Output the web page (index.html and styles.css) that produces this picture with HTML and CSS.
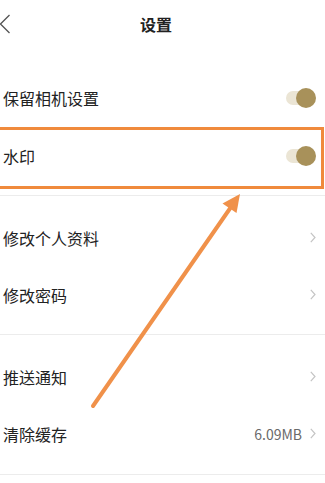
FILE: index.html
```html
<!DOCTYPE html>
<html lang="zh">
<head>
<meta charset="utf-8">
<title>设置</title>
<link rel="stylesheet" href="styles.css">
</head>
<body>
<div class="page">
  <header class="header">
    <svg class="back" width="12" height="20" viewBox="0 0 12 20"><polyline points="10.5,1 1.5,10 10.5,19" fill="none" stroke="#555" stroke-width="1.3"/></svg>
    <h1 class="title">设置</h1>
  </header>

  <section class="group group-first">
    <div class="row">
      <span class="label">保留相机设置</span>
      <span class="toggle"><span class="track"></span><span class="knob"></span></span>
    </div>
    <div class="row row-marked">
      <span class="label">水印</span>
      <span class="toggle"><span class="track"></span><span class="knob"></span></span>
      <span class="mark"></span>
    </div>
  </section>

  <section class="group">
    <div class="row row-s">
      <span class="label">修改个人资料</span>
      <svg class="chev" width="6" height="11" viewBox="0 0 6 11"><polyline points="0.8,0.8 5,5.5 0.8,10.2" fill="none" stroke="#c4c4c4" stroke-width="1.2"/></svg>
    </div>
    <div class="row row-s">
      <span class="label">修改密码</span>
      <svg class="chev" width="6" height="11" viewBox="0 0 6 11"><polyline points="0.8,0.8 5,5.5 0.8,10.2" fill="none" stroke="#c4c4c4" stroke-width="1.2"/></svg>
    </div>
  </section>

  <section class="group">
    <div class="row row-s">
      <span class="label">推送通知</span>
      <svg class="chev" width="6" height="11" viewBox="0 0 6 11"><polyline points="0.8,0.8 5,5.5 0.8,10.2" fill="none" stroke="#c4c4c4" stroke-width="1.2"/></svg>
    </div>
    <div class="row row-s">
      <span class="label">清除缓存</span>
      <span class="value">6.09MB</span>
      <svg class="chev" width="6" height="11" viewBox="0 0 6 11"><polyline points="0.8,0.8 5,5.5 0.8,10.2" fill="none" stroke="#c4c4c4" stroke-width="1.2"/></svg>
    </div>
  </section>

  <svg class="arrow" width="325" height="483" viewBox="0 0 325 483">
    <line x1="93" y1="406" x2="231" y2="207" stroke="#f0914a" stroke-width="4" stroke-linecap="round"/>
    <polygon points="240,194 236.5,213 222.5,203.5" fill="#f0914a"/>
  </svg>
</div>
</body>
</html>
```

FILE: styles.css
```css
* { box-sizing: border-box; }
html, body { margin: 0; padding: 0; background: #fff; }
body {
  font-family: "Noto Sans CJK SC", "Noto Sans", "Liberation Sans", sans-serif;
  color: #222;
  width: 325px;
  height: 483px;
  overflow: hidden;
}
.page { position: relative; width: 325px; height: 483px; }

.header {
  height: 56px;
  display: flex;
  align-items: center;
  padding-bottom: 8px;
}
.back { flex: none; margin-left: -1px; margin-top: 0; }
.title {
  flex: 1;
  margin: 0;
  text-align: center;
  font-size: 16px;
  font-weight: 700;
  padding-right: 24px;
  color: #222;
}

.group {
  padding: 13px 0 11px;
  border-bottom: 1px solid #ececec;
}
.group-first { padding-top: 13px; padding-bottom: 10px; }
.group:last-of-type { padding-bottom: 12px; }

.row {
  position: relative;
  height: 58px;
  display: flex;
  align-items: center;
  padding: 0 9px 0 3px;
}
.row-s { height: 57px; }
.label { flex: 1; font-size: 16px; color: #222; }
.value { font-size: 14px; color: #6a6a6a; margin-right: 8px; }
.chev { flex: none; margin-bottom: 1px; }

.toggle {
  position: relative;
  width: 30px;
  height: 20px;
  flex: none;
}
.track {
  position: absolute;
  left: 0; top: 3px;
  width: 26px; height: 14px;
  border-radius: 7px;
  background: #ebe5d5;
}
.knob {
  position: absolute;
  right: 0; top: 0;
  width: 20px; height: 20px;
  border-radius: 50%;
  background: #a8915a;
}

.mark {
  position: absolute;
  left: -4px; right: 1px;
  top: 0; bottom: -4px;
  border: 3px solid #f08a3c;
}

.arrow {
  position: absolute;
  left: 0; top: 0;
  pointer-events: none;
}
```
